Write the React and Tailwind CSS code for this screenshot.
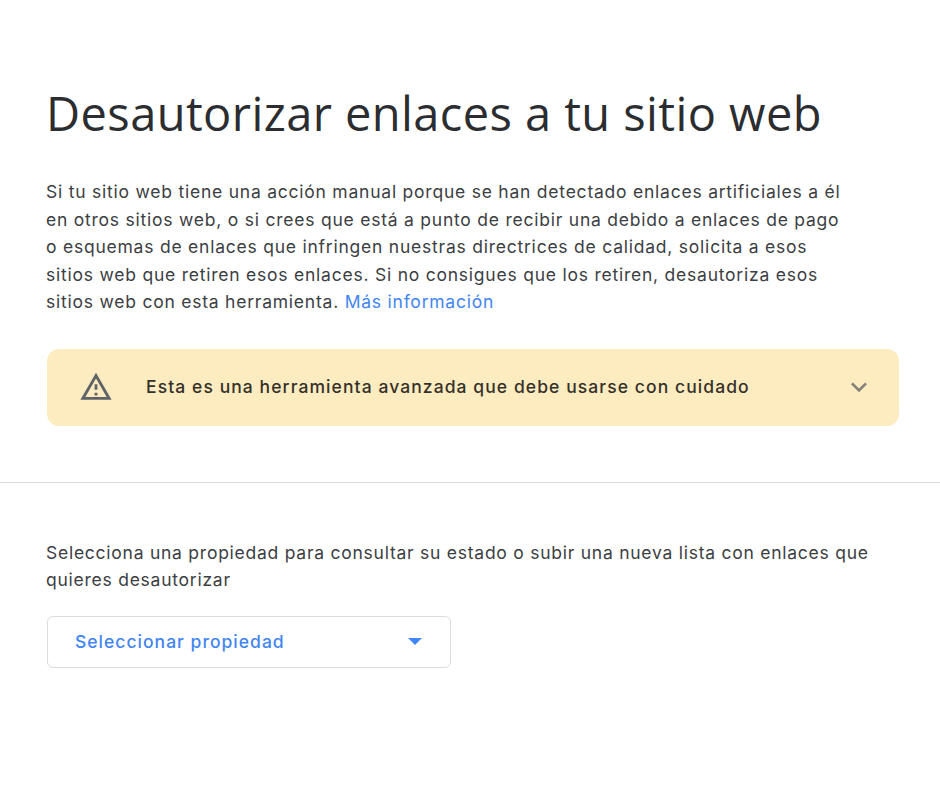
export default function App() {
  return (
    <div className="min-h-[788px] bg-white font-['Inter',sans-serif] text-[#3c4043]">
      <div className="px-[46px] pt-[83px]">
        <h1 className="font-['Open_Sans',sans-serif] text-[47px] leading-[60px] text-[#2b2d30] tracking-[0.42px]">
          Desautorizar enlaces a tu sitio web
        </h1>

        <p className="mt-[35px] w-[830px] text-[17.5px] leading-[27.5px] tracking-[0.77px]">
          Si tu sitio web tiene una acción manual porque se han detectado enlaces artificiales a él
          <br />
          en otros sitios web, o si crees que está a punto de recibir una debido a enlaces de pago
          <br />
          o esquemas de enlaces que infringen nuestras directrices de calidad, solicita a esos
          <br />
          sitios web que retiren esos enlaces. Si no consigues que los retiren, desautoriza esos
          <br />
          sitios web con esta herramienta. <a className="text-[#4285f4]">Más información</a>
        </p>

        {/* Warning banner */}
        <div className="mt-[33px] ml-px flex h-[77px] w-[852px] items-center rounded-xl bg-[#fdecc0] pl-[32px] pr-[24px]">
          <svg viewBox="0 0 24 24" className="h-[34px] w-[34px] fill-[#5f6368]">
            <path d="M12 5.99 19.53 19H4.47L12 5.99M12 2 1 21h22L12 2zm1 14h-2v2h2v-2zm0-6h-2v4h2v-4z" />
          </svg>
          <span className="ml-[33px] flex-1 pt-px text-[17.5px] font-medium tracking-[1.08px] text-[#35312a]">
            Esta es una herramienta avanzada que debe usarse con cuidado
          </span>
          <svg viewBox="0 0 24 24" className="h-8 w-8 fill-[#85827a]">
            <path d="M7.41 8.59 12 13.17l4.59-4.58L18 10l-6 6-6-6z" />
          </svg>
        </div>
      </div>

      <div className="mt-[56px] border-t border-[#dadce0]" />

      <div className="px-[46px] pt-[56px]">
        <p className="w-[860px] text-[17.5px] leading-[27.5px] tracking-[0.75px]">
          Selecciona una propiedad para consultar su estado o subir una nueva lista con enlaces que
          <br />
          quieres desautorizar
        </p>
        <div className="mt-[22px] ml-px flex h-[52px] w-[404px] items-center justify-between rounded-md border border-[#dadce0] pl-[27px] pr-[28px]">
          <span className="pt-px text-[17.5px] font-medium tracking-[1.02px] text-[#4285f4]">
            Seleccionar propiedad
          </span>
          <svg viewBox="0 0 14 7" className="h-[7px] w-[14px] fill-[#4285f4]">
            <path d="M0 0h14L7 7z" />
          </svg>
        </div>
      </div>
    </div>
  )
}
